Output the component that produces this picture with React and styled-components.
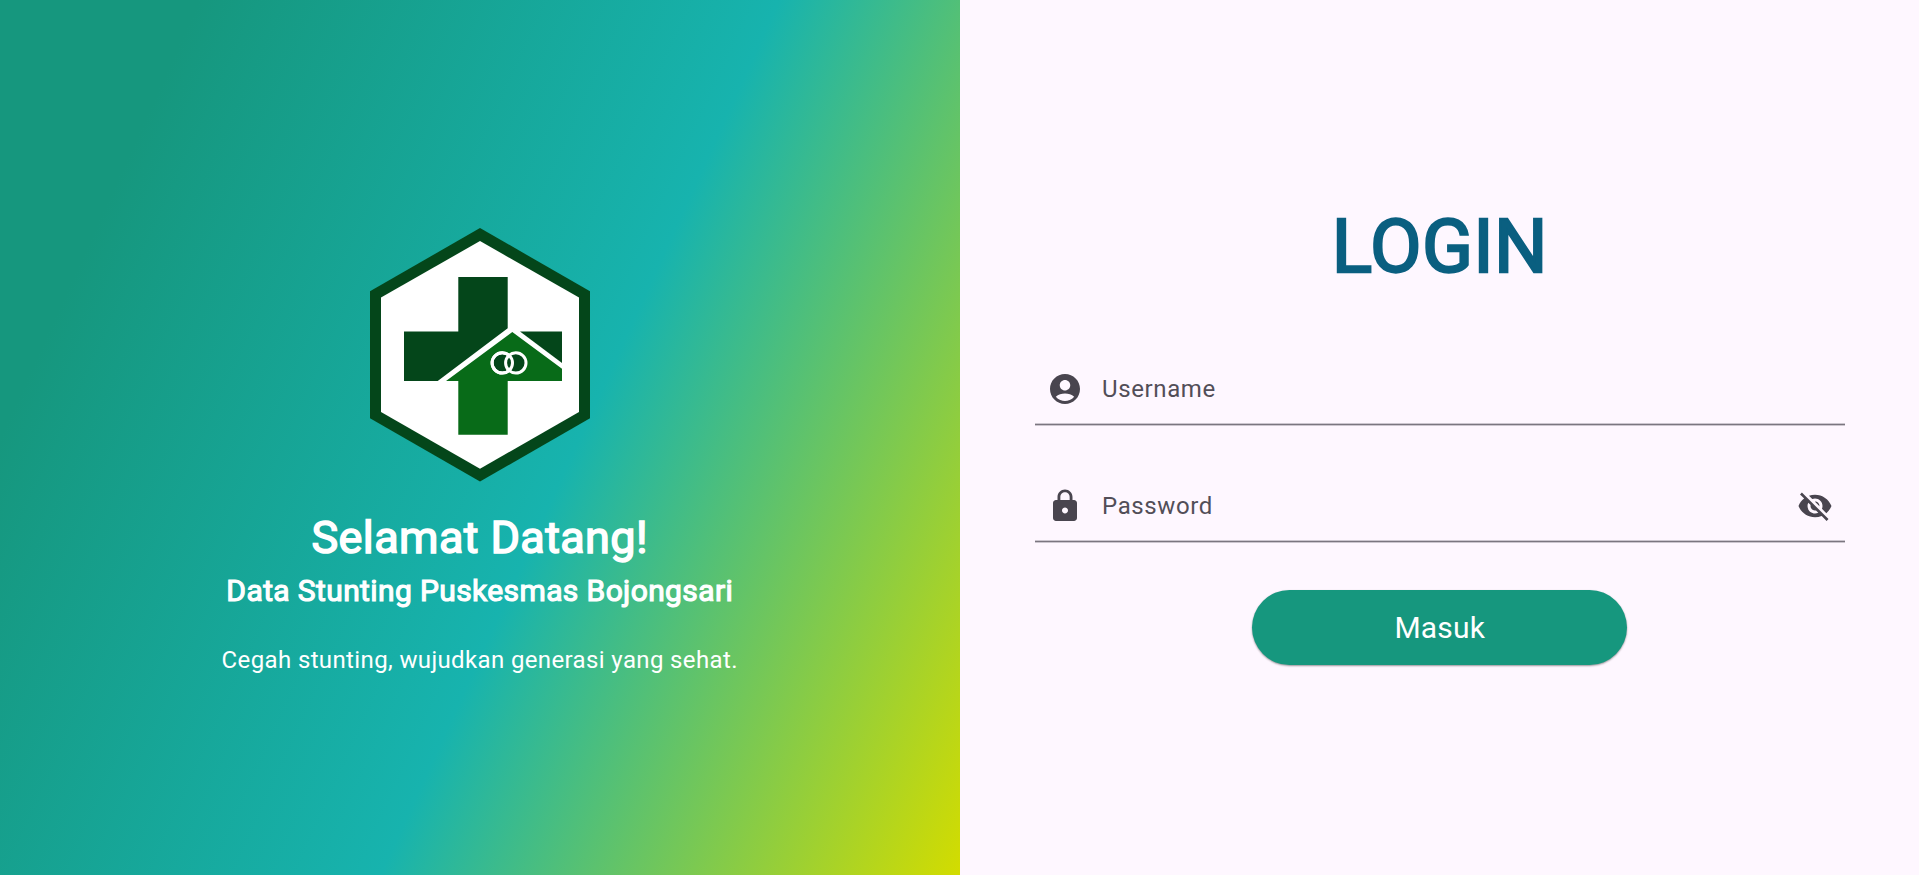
import React from "react";
import styled, { createGlobalStyle } from "styled-components";

const GlobalStyle = createGlobalStyle`
  *, *::before, *::after { box-sizing: border-box; }
  body { margin: 0; font-family: Roboto, sans-serif; }
`;

const Page = styled.main`
  display: grid;
  grid-template-columns: 1fr 1fr;
  height: 100vh;
  min-height: 875px;
  background: #fef7ff;
`;

const Welcome = styled.section`
  display: flex;
  flex-direction: column;
  align-items: center;
  padding-top: 228px;
  color: #fff;
  background: linear-gradient(114.51deg, #16977e 14.66%, #17b3ae 57.33%, #d3dc00 100%);
`;

const Logo = styled.svg`
  display: block;
  width: 220px;
  height: 254px;
`;

const Line = styled.p`
  margin: ${(p) => p.$gap}px 0 0;
  font-size: ${(p) => p.$size}px;
  line-height: ${(p) => p.$height}px;
  letter-spacing: ${(p) => p.$spacing || 0}px;
  -webkit-text-stroke: ${(p) => p.$stroke || 0}px currentColor;
  white-space: nowrap;
`;

const LoginPanel = styled.form`
  display: flex;
  flex-direction: column;
  align-items: center;
  padding: 202px 74.5px 0 75.5px;
`;

const Title = styled.h1`
  margin: 0 0 63px;
  font-size: 75px;
  font-weight: 400;
  line-height: 88px;
  letter-spacing: 0.3px;
  color: #0a5f80;
  -webkit-text-stroke: 2.3px currentColor;
`;

const Field = styled.label`
  display: flex;
  align-items: center;
  width: 100%;
  height: 72px;
  margin-bottom: 45px;
  padding: 0 12px;
  border-bottom: 1px solid #7b7680;
  box-shadow: 0 1px 0 #ccc6cf, inset 0 -1px 0 #ccc6cf;
  color: #49454f;
`;

const Input = styled.input`
  flex: 1;
  min-width: 0;
  margin-left: 19px;
  padding: 0;
  border: 0;
  outline: 0;
  background: none;
  font: 400 24px/30px Roboto, sans-serif;
  letter-spacing: 0.625px;
  color: #524e58;
  &::placeholder { color: #524e58; opacity: 1; }
`;

const Icon = styled.svg`
  flex: none;
  width: 36px;
  height: 36px;
  fill: currentColor;
`;

const Submit = styled.button`
  width: 375px;
  height: 75px;
  margin: 3px 0 0;
  border: 0;
  border-radius: 38px;
  background: #16977e;
  color: #fff;
  font: 400 30px/36px Roboto, sans-serif;
  letter-spacing: 0.15px;
  box-shadow: 0 1px 2px rgba(0, 0, 0, 0.4);
`;

const ACCOUNT = "M12 2C6.48 2 2 6.48 2 12s4.48 10 10 10 10-4.48 10-10S17.52 2 12 2zm0 4c1.93 0 3.5 1.57 3.5 3.5S13.93 13 12 13s-3.5-1.57-3.5-3.5S10.07 6 12 6zm0 14c-2.03 0-4.43-.82-6.14-2.88C7.55 15.8 9.68 15 12 15s4.45.8 6.14 2.12C16.43 19.18 14.03 20 12 20z";
const LOCK = "M18 8h-1V6c0-2.76-2.24-5-5-5S7 3.24 7 6v2H6c-1.1 0-2 .9-2 2v10c0 1.1.9 2 2 2h12c1.1 0 2-.9 2-2V10c0-1.1-.9-2-2-2zm-6 9c-1.1 0-2-.9-2-2s.9-2 2-2 2 .9 2 2-.9 2-2 2zm3.1-9H8.9V6c0-1.71 1.39-3.1 3.1-3.1 1.71 0 3.1 1.39 3.1 3.1v2z";
const EYE_OFF = "M12 7c2.76 0 5 2.24 5 5 0 .65-.13 1.26-.36 1.83l2.92 2.92c1.51-1.26 2.7-2.89 3.43-4.75-1.73-4.39-6-7.5-11-7.5-1.4 0-2.74.25-3.98.7l2.16 2.16C10.74 7.13 11.35 7 12 7zM2 4.27l2.28 2.28.46.46C3.08 8.3 1.78 10.02 1 12c1.73 4.39 6 7.5 11 7.5 1.55 0 3.03-.3 4.38-.84l.42.42L19.73 22 21 20.73 3.27 3 2 4.27zM7.53 9.8l1.55 1.55c-.05.21-.08.43-.08.65 0 1.66 1.34 3 3 3 .22 0 .44-.03.65-.08l1.55 1.55c-.67.33-1.41.53-2.2.53-2.76 0-5-2.24-5-5 0-.79.2-1.53.53-2.2zm4.31-.78l3.15 3.15.02-.16c0-1.66-1.34-3-3-3l-.17.01z";

function Glyph({ d }) {
  return (
    <Icon viewBox="0 0 24 24" aria-hidden="true">
      <path d={d} />
    </Icon>
  );
}

function ClinicLogo() {
  return (
    <Logo viewBox="10 8 220 254" role="img">
      <path fill="#04461a" d="M120 8L230 71.3V198.3L120 261.5L10 198.3V71.3Z" />
      <path fill="#fff" d="M120 21L219 77.6V192L120 248.8L21 192V77.6Z" />
      <path fill="#04461a" d="M98.3 57H147.7V108.3L77.7 161H44V111.5H98.3Z" />
      <path fill="#04461a" d="M160 111.5H202V143Z" />
      <path fill="#086b18" d="M152.3 112L202 148.7V161H147.7V214.8H98.3V161H86Z" />
      <g fill="#04461a" stroke="#fff" strokeWidth="3">
        <circle cx="142.3" cy="142.9" r="10.2" />
        <circle cx="155.8" cy="142.9" r="10.2" />
        <circle cx="142.3" cy="142.9" r="10.2" fill="none" />
      </g>
    </Logo>
  );
}

export default function App() {
  return (
    <>
      <GlobalStyle />
      <Page>
        <Welcome>
          <ClinicLogo />
          <Line $gap={30} $size={45} $height={52} $stroke={1.5} $spacing={0.38}>Selamat Datang!</Line>
          <Line $gap={9} $size={30} $height={36} $stroke={1.15} $spacing={0.38}>Data Stunting Puskesmas Bojongsari</Line>
          <Line $gap={36} $size={24} $height={30} $spacing={0.37}>Cegah stunting, wujudkan generasi yang sehat.</Line>
        </Welcome>
        <LoginPanel>
          <Title>LOGIN</Title>
          <Field>
            <Glyph d={ACCOUNT} />
            <Input placeholder="Username" />
          </Field>
          <Field>
            <Glyph d={LOCK} />
            <Input type="password" placeholder="Password" />
            <Glyph d={EYE_OFF} />
          </Field>
          <Submit type="button">Masuk</Submit>
        </LoginPanel>
      </Page>
    </>
  );
}
